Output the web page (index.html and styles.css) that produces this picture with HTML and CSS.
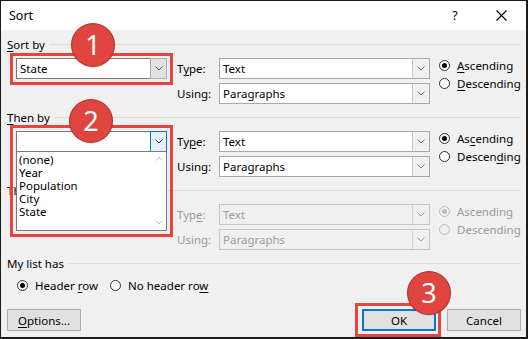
FILE: index.html
```html
<!DOCTYPE html>
<html lang="en">

<head>
  <meta charset="UTF-8">
  <title>Sort</title>
  <link rel="stylesheet" href="styles.css">
</head>

<body>
  <div class="dialog">
    <div class="titlebar">
      <span class="title">Sort</span>
      <span class="help">?</span>
      <span class="close">
        <svg width="11" height="11" viewBox="0 0 11 11"><path d="M0.5 0.5L10.5 10.5M10.5 0.5L0.5 10.5" stroke="#000" stroke-width="1.1" fill="none"/></svg>
      </span>
    </div>

    <div class="body">
      <!-- sort by -->
      <div class="group">
        <div class="legend"><span><u>S</u>ort by</span></div>
        <div class="sort-row">
          <div class="combo">
            <span class="value">State</span>
            <span class="arrow"><svg width="8" height="5" viewBox="0 0 8 5"><path d="M0.5 0.5L4 4L7.5 0.5" stroke="#555" fill="none"/></svg></span>
          </div>
          <div class="params">
            <div class="param"><label>T<u>y</u>pe:</label>
              <div class="select"><span class="value">Text</span><span class="arrow"><svg width="8" height="5" viewBox="0 0 8 5"><path d="M0.5 0.5L4 4L7.5 0.5" stroke="#777" fill="none"/></svg></span></div>
            </div>
            <div class="param"><label>Using:</label>
              <div class="select"><span class="value">Paragraphs</span><span class="arrow"><svg width="8" height="5" viewBox="0 0 8 5"><path d="M0.5 0.5L4 4L7.5 0.5" stroke="#777" fill="none"/></svg></span></div>
            </div>
          </div>
          <div class="order">
            <div class="radio checked"><span class="dot"></span><span><u>A</u>scending</span></div>
            <div class="radio"><span class="dot"></span><span><u>D</u>escending</span></div>
          </div>
        </div>
      </div>

      <!-- then by -->
      <div class="group">
        <div class="legend"><span><u>T</u>hen by</span></div>
        <div class="sort-row">
          <div class="combo open">
            <span class="value"></span>
            <span class="arrow"><svg width="8" height="5" viewBox="0 0 8 5"><path d="M0.5 0.5L4 4L7.5 0.5" stroke="#333" fill="none"/></svg></span>
            <div class="droplist">
              <ul>
                <li>(none)</li>
                <li>Year</li>
                <li>Population</li>
                <li>City</li>
                <li>State</li>
              </ul>
              <div class="scroll">
                <svg width="8" height="5" viewBox="0 0 8 5"><path d="M0.5 4.5L4 1L7.5 4.5" stroke="#c2c2c2" fill="none"/></svg>
                <svg width="8" height="5" viewBox="0 0 8 5"><path d="M0.5 0.5L4 4L7.5 0.5" stroke="#c2c2c2" fill="none"/></svg>
              </div>
            </div>
          </div>
          <div class="params">
            <div class="param"><label>Ty<u>p</u>e:</label>
              <div class="select"><span class="value">Text</span><span class="arrow"><svg width="8" height="5" viewBox="0 0 8 5"><path d="M0.5 0.5L4 4L7.5 0.5" stroke="#777" fill="none"/></svg></span></div>
            </div>
            <div class="param"><label>Using:</label>
              <div class="select"><span class="value">Paragraphs</span><span class="arrow"><svg width="8" height="5" viewBox="0 0 8 5"><path d="M0.5 0.5L4 4L7.5 0.5" stroke="#777" fill="none"/></svg></span></div>
            </div>
          </div>
          <div class="order">
            <div class="radio checked"><span class="dot"></span><span>As<u>c</u>ending</span></div>
            <div class="radio"><span class="dot"></span><span>Descen<u>d</u>ing</span></div>
          </div>
        </div>
      </div>

      <!-- then by (disabled) -->
      <div class="group disabled">
        <div class="legend"><span class="dark">Then <u>b</u>y</span></div>
        <div class="sort-row">
          <div class="combo">
            <span class="value"></span>
            <span class="arrow"></span>
          </div>
          <div class="params">
            <div class="param"><label>Typ<u>e</u>:</label>
              <div class="select"><span class="value">Text</span><span class="arrow"><svg width="8" height="5" viewBox="0 0 8 5"><path d="M0.5 0.5L4 4L7.5 0.5" stroke="#999" fill="none"/></svg></span></div>
            </div>
            <div class="param"><label>Using:</label>
              <div class="select"><span class="value">Paragraphs</span><span class="arrow"><svg width="8" height="5" viewBox="0 0 8 5"><path d="M0.5 0.5L4 4L7.5 0.5" stroke="#999" fill="none"/></svg></span></div>
            </div>
          </div>
          <div class="order">
            <div class="radio checked"><span class="dot"></span><span>Ascending</span></div>
            <div class="radio"><span class="dot"></span><span>Descending</span></div>
          </div>
        </div>
      </div>

      <!-- header row -->
      <div class="legend"><span>My list has</span></div>
      <div class="header-row">
        <div class="radio checked"><span class="dot"></span><span>Header <u>r</u>ow</span></div>
        <div class="radio"><span class="dot"></span><span>No header ro<u>w</u></span></div>
      </div>

      <div class="buttons">
        <button class="btn"><u>O</u>ptions...</button>
        <span class="spacer"></span>
        <button class="btn default">OK</button>
        <button class="btn">Cancel</button>
      </div>
    </div>

    <!-- callouts -->
    <div class="mark mark-1"></div>
    <div class="mark mark-2"></div>
    <div class="mark mark-3"></div>
    <div class="badge badge-1">1</div>
    <div class="badge badge-2">2</div>
    <div class="badge badge-3">3</div>
  </div>
</body>

</html>
```

FILE: styles.css
```css
* {
  margin: 0;
  padding: 0;
}

body {
  font-family: "Noto Sans", "Open Sans", sans-serif;
  font-size: 11.5px;
  color: #000;
  background: #fff;
}

ul li {
  list-style: none;
}

u {
  text-decoration-thickness: 1px;
  text-underline-offset: 2px;
}

.dialog {
  position: relative;
  width: 528px;
  height: 339px;
  box-sizing: border-box;
  border: solid #1c1c1c;
  border-width: 1px 2px 2px 1px;
  background: #f0f0f0;
  overflow: hidden;
}

/* 标题栏 */
.titlebar {
  height: 29px;
  background: #fff;
  display: flex;
  align-items: center;
  padding: 0 2px 0 8px;
  font-size: 12.5px;
}

.titlebar .title {
  flex: 1;
}

.titlebar .help,
.titlebar .close {
  width: 46px;
  text-align: center;
  display: flex;
  justify-content: center;
  align-items: center;
}

.body {
  padding: 8px 5px 0 6px;
}

.group {
  margin-bottom: 7px;
}

.legend {
  display: flex;
  align-items: center;
  height: 14px;
  line-height: 14px;
  margin-bottom: 6px;
}

.legend::after {
  content: '';
  flex: 1;
  border-top: 1px solid #dadada;
  margin: -2px 0 0 5px;
}

.sort-row {
  display: flex;
  margin-left: 9px;
  height: 46px;
}

/* 下拉框 */
.combo {
  position: relative;
  width: 151px;
  height: 21px;
  box-sizing: border-box;
  border: 1px solid #7a7a7a;
  background: #fff;
  display: flex;
}

.value {
  flex: 1;
  padding-left: 3px;
  line-height: 19px;
  white-space: nowrap;
}

.combo .arrow {
  width: 15px;
  background: #e1e1e1;
  border: 1px solid #adadad;
  margin: -1px -1px -1px 0;
  display: flex;
  align-items: center;
  justify-content: center;
}

.combo.open .arrow {
  background: #e5f1fb;
  border-color: #0078d7;
}

.droplist {
  position: absolute;
  left: -1px;
  top: 19px;
  width: 151px;
  height: 80px;
  box-sizing: border-box;
  border: 1px solid #7a7a7a;
  background: #fff;
  display: flex;
  z-index: 2;
}

.droplist ul {
  flex: 1;
  padding: 1px 0 0 2px;
  line-height: 13px;
}

.droplist .scroll {
  width: 15px;
  display: flex;
  flex-direction: column;
  justify-content: space-between;
  align-items: center;
  padding: 4px 0 5px;
}

.params {
  margin-left: 10px;
  display: flex;
  flex-direction: column;
  gap: 4px;
}

.param {
  display: flex;
  align-items: center;
  height: 21px;
}

.param label {
  width: 42px;
}

.select {
  width: 211px;
  height: 21px;
  box-sizing: border-box;
  border: 1px solid #a9a9a9;
  background: #fff;
  display: flex;
}

.select .arrow {
  width: 16px;
  background: #f0f0f0;
  border-left: 1px solid #c8c8c8;
  display: flex;
  align-items: center;
  justify-content: center;
}

.order {
  margin: -2px 0 0 9px;
}

/* 单选按钮 */
.radio {
  display: flex;
  align-items: center;
  height: 18px;
  gap: 7px;
}

.radio .dot {
  width: 11px;
  height: 11px;
  box-sizing: border-box;
  border: 1px solid #333;
  border-radius: 50%;
  background: #fff;
  position: relative;
}

.radio.checked .dot::after {
  content: '';
  position: absolute;
  left: 2px;
  top: 2px;
  width: 5px;
  height: 5px;
  border-radius: 50%;
  background: #000;
}

/* 禁用状态 */
.disabled .param,
.disabled .radio {
  color: #9a9a9a;
}

.disabled .select {
  background: #f0f0f0;
  border-color: #c4c4c4;
}

.disabled .select .arrow {
  border-left-color: #d4d4d4;
}

.disabled .combo {
  background: #f0f0f0;
  border-color: #c4c4c4;
}

.disabled .combo .arrow {
  background: #f0f0f0;
  border-color: #c4c4c4;
}

.disabled .radio .dot {
  border-color: #bcbcbc;
  background: #f0f0f0;
}

.disabled .radio.checked .dot::after {
  background: #bcbcbc;
}

.header-row {
  display: flex;
  align-items: center;
  height: 16px;
  margin: 6px 0 0 10px;
  gap: 12px;
}

.buttons {
  display: flex;
  margin-top: 16px;
  gap: 11px;
}

.buttons .spacer {
  flex: 1;
}

.btn {
  width: 74px;
  height: 22px;
  box-sizing: border-box;
  border: 1px solid #adadad;
  background: #e1e1e1;
  font: inherit;
  color: #000;
}

.btn.default {
  border: 2px solid #0078d7;
}

/* 标注 */
.mark {
  position: absolute;
  border: 3px solid #e8443f;
  z-index: 3;
}

.mark-1 {
  left: 9px;
  top: 52px;
  width: 157px;
  height: 26px;
}

.mark-2 {
  left: 9px;
  top: 124px;
  width: 157px;
  height: 106px;
}

.mark-3 {
  left: 354px;
  top: 302px;
  width: 80px;
  height: 28px;
}

.badge {
  position: absolute;
  width: 42px;
  height: 42px;
  border-radius: 50%;
  background: #e0463f;
  box-shadow: 0 0 0 1px #b1302b, 0 1px 2px rgba(0, 0, 0, .3);
  color: #fff;
  font-size: 27px;
  line-height: 42px;
  text-align: center;
  z-index: 4;
}

.badge-1 {
  left: 71px;
  top: 23px;
}

.badge-2 {
  left: 69px;
  top: 99px;
}

.badge-3 {
  left: 407px;
  top: 271px;
}
```
